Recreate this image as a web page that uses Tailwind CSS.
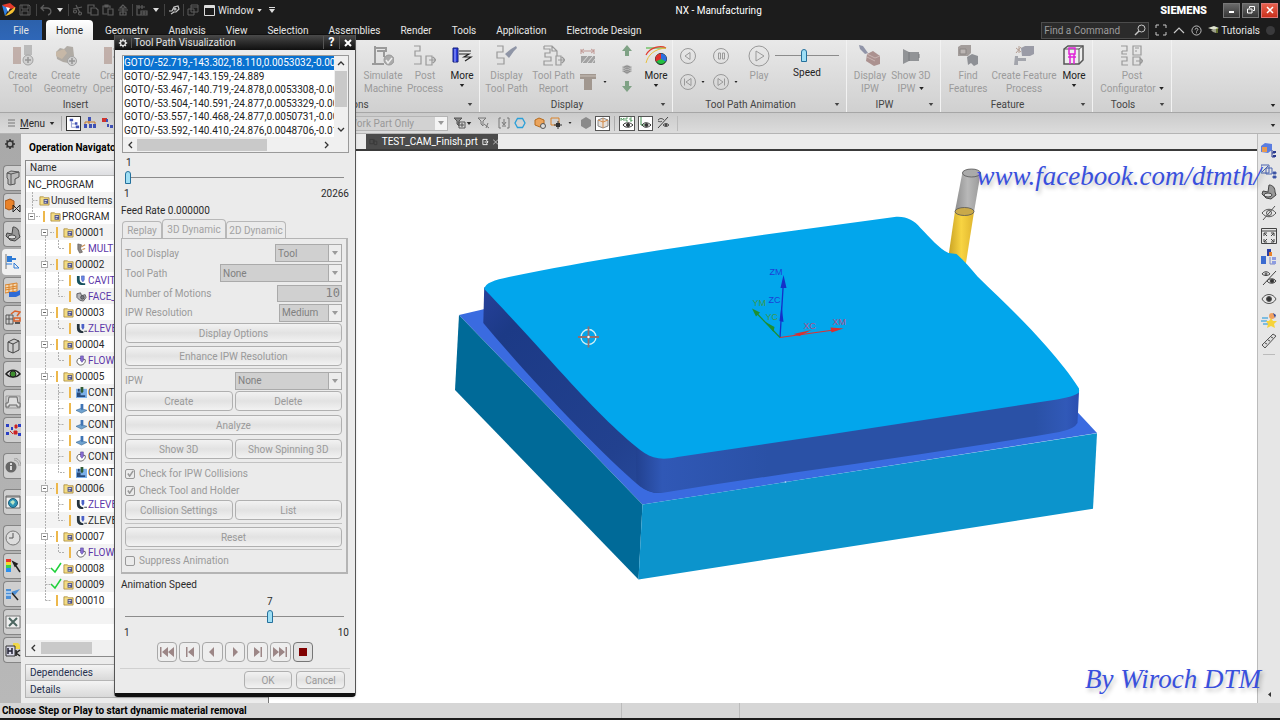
<!DOCTYPE html>
<html lang="en">
<head>
    <meta charset="UTF-8">
    <meta name="viewport" content="width=device-width, initial-scale=1.0">
    <title>NX - Manufacturing</title>
    <script src="https://cdn.jsdelivr.net/npm/@tailwindcss/browser@4"></script>
</head>
<body class="relative flex h-screen flex-col overflow-hidden bg-[#1c1c1c] font-[Roboto,'Open_Sans',sans-serif] text-[10px] leading-[13px] text-[#2a2a2a]">

    <!-- Icon sprite -->
    <svg class="hidden" xmlns="http://www.w3.org/2000/svg">
        <symbol id="tri" viewBox="0 0 6 4"><path d="M0 0h6L3 4z" fill="currentColor"/></symbol>
        <symbol id="gear" viewBox="0 0 12 12"><circle cx="6" cy="6" r="3" fill="none" stroke="currentColor" stroke-width="1.5"/><path d="M6 1v2M6 9v2M1 6h2M9 6h2M2.5 2.5l1.3 1.3M8.2 8.2l1.3 1.3M2.5 9.5l1.3-1.3M8.2 3.8l1.3-1.3" stroke="currentColor" stroke-width="1.6"/></symbol>
        <symbol id="folder" viewBox="0 0 12 12"><path d="M1 2h4l1 1h5v8H1z" fill="#f3dc84" stroke="#a3812c" stroke-width=".8"/><path d="M5 4.500h5v5H5z" fill="#4a4f8a"/><path d="M6 6h3M6 8h2" stroke="#fff" stroke-width=".8"/></symbol>
        <symbol id="op-multi" viewBox="0 0 12 12"><path d="M2 1l4 1-1 4 2 4-3 1-2-4z" fill="#8d8784" stroke="#5b5552" stroke-width=".7"/><path d="M6 4l4-2M7 7l3-1" stroke="#c98c4d" stroke-width="1.2"/></symbol>
        <symbol id="op-cavity" viewBox="0 0 12 12"><path d="M1 1h3v4c0 3 2 4 4 4h2v2H6C3 11 1 9 1 6z" fill="#15505c"/><path d="M6 1h3v4l-1 2H7L6 5z" fill="#6a86e8" stroke="#3c50a8" stroke-width=".6"/></symbol>
        <symbol id="op-face" viewBox="0 0 12 12"><path d="M1 3l4-1 1 3 4-1 1 3-3 4-4-1-3-3z" fill="#b5b5b8" stroke="#4e4e55" stroke-width=".9"/><circle cx="7" cy="7" r="2" fill="#77777f" stroke="#333" stroke-width=".6"/></symbol>
        <symbol id="op-zlevel" viewBox="0 0 12 12"><path d="M1 1h3v4c0 3 2 4 4 4v2H6C3 11 1 9 1 6z" fill="#26333d"/><path d="M6 1h3v4l-1 2H7L6 5z" fill="#4a60c8"/><path d="M9 9h3" stroke="#26333d"/></symbol>
        <symbol id="op-flow" viewBox="0 0 12 12"><path d="M1 7c0-3 3-4 5-3l4 1c1 3-2 6-5 6-2 0-4-2-4-4z" fill="#fff" stroke="#444" stroke-width=".9"/><path d="M5 1h3v5L6.500 8 5 6z" fill="#8a6fd6" stroke="#4b3a91" stroke-width=".6"/></symbol>
        <symbol id="op-area" viewBox="0 0 12 12"><path d="M0 8l5-2 7 2-6 3z" fill="#6fa2cf" stroke="#2e5d8a" stroke-width=".6"/><path d="M5 1h3v5L6.500 8 5 6z" fill="#3f74b5"/></symbol>
        <symbol id="op-pocket" viewBox="0 0 12 12"><path d="M0 2h12v10H0z" fill="#7db0ea"/><path d="M1 6h4v3h5v2H1z" fill="#274a7c"/><path d="M5 0h3v5L6.500 7 5 5z" fill="#2f5a33"/><path d="M2 2h2v3H2z" fill="#1e3a66"/></symbol>
        <symbol id="check" viewBox="0 0 12 12"><path d="M1 6l4 4 6-9" fill="none" stroke="#1fd03a" stroke-width="1.500"/></symbol>
        <symbol id="nodes" viewBox="0 0 14 14"><path d="M2 2h4v3H2zM8 6h3v3H8zM9 10h4v3H9z" fill="#3f51b5"/><path d="M4 5v3h4M4 8v4h5" fill="none" stroke="#8591c9"/></symbol>
    </svg>

    <!-- Title bar -->
    <header class="flex h-5 shrink-0 items-center text-white">
        <div class="flex w-[277px] items-center gap-[3px] pl-[2px] text-[#5c5c5c]">
            <svg class="h-[14px] w-[14px]" viewBox="0 0 14 14"><path d="M0 2l7 3-4 8z" fill="#2f7fe0"/><path d="M0 2l8-2 6 5-7 1z" fill="#e33a2c"/><path d="M13 4c1 4-4 8-10 9l5-5z" fill="#f5c131"/><path d="M4 4l4 1-2 4z" fill="#fff"/></svg>
            <svg class="h-3 w-3" viewBox="0 0 12 12" fill="none" stroke="currentColor"><path d="M1 1h9l1 1v9H1zM3 1v4h6V1M3 11V7h6v4"/></svg>
            <span class="ml-[2px] h-3 w-px bg-[#444]"></span>
            <svg class="h-3 w-3" viewBox="0 0 12 12" fill="none" stroke="currentColor" stroke-width="1.300"><path d="M4 1L1 4l3 3M1 4h6c5 0 5 6 1 7"/></svg>
            <svg class="mx-[2px] h-1 w-[6px] text-[#ddd]"><use href="#tri"/></svg>
            <span class="h-3 w-px bg-[#444]"></span>
            <svg class="h-3 w-3" viewBox="0 0 12 12" fill="none" stroke="currentColor" stroke-width="1.200"><path d="M1 5l9-2M4 1l4 8"/><circle cx="3" cy="7.500" r="1.500"/><circle cx="8" cy="9.500" r="1.500"/></svg>
            <svg class="h-3 w-3" viewBox="0 0 12 12" fill="none" stroke="currentColor" stroke-width="1.200"><path d="M4 9H1V1h6v2M4 4h5l2 2v5H4z"/></svg>
            <svg class="h-3 w-3" viewBox="0 0 12 12" fill="none" stroke="currentColor" stroke-width="1.200"><path d="M5 10H1V2h7v2M3 1h3v2H3zM6 5h5v6H6z"/></svg>
            <svg class="h-3 w-3" viewBox="0 0 12 12" fill="none" stroke="currentColor" stroke-width="1.200"><path d="M6 1L3 4h6zM1 6h10M6 4v7M3 8h6v3H3z"/></svg>
            <span class="h-3 w-px bg-[#444]"></span>
            <svg class="h-3 w-3" viewBox="0 0 12 12" fill="none" stroke="currentColor" stroke-width="1.200"><path d="M1 1v10h4M1 3h8M3 1v4M6 1v4M5 7h6v4H5zM5 9h6M8 7v4"/></svg>
            <svg class="mx-[2px] h-1 w-[6px] text-[#ddd]"><use href="#tri"/></svg>
            <span class="h-3 w-px bg-[#444]"></span>
            <svg class="h-3 w-3 text-[#c8c8c8]" viewBox="0 0 12 12" fill="none" stroke="currentColor" stroke-width="1.200"><path d="M1 7h3l2-4 4-1 1 3-3 3H5M3 10l3-2"/><circle cx="7" cy="5" r="1"/></svg>
            <span class="h-3 w-px bg-[#444]"></span>
            <svg class="h-3 w-3" viewBox="0 0 12 12" fill="none" stroke="currentColor"><path d="M4 1h7v7H4zM4 3h7M1 5h6v6H1z"/></svg>
            <button class="ml-[2px] flex items-center gap-[3px] text-[#e4e4e4]">
                <svg class="h-[11px] w-[11px]" viewBox="0 0 11 11" fill="none" stroke="#ddd"><path d="M.5.500h10v10H.500z"/><path d="M1 2h9" stroke-width="2"/></svg>
                Window
                <svg class="h-[3px] w-[5px]"><use href="#tri"/></svg>
            </button>
            <svg class="ml-1 h-[6px] w-[6px]" viewBox="0 0 6 6" fill="#ddd"><path d="M0 0h6v1H0zM0 2h6L3 6z"/></svg>
        </div>
        <h1 class="flex-1 text-center">NX - Manufacturing</h1>
        <div class="flex items-center gap-[2px] pr-[2px]">
            <span class="mr-[14px] text-[11px] font-black">SIEMENS</span>
            <button aria-label="Minimize" class="flex h-[15px] w-[17px] items-end justify-center border border-[#777] bg-gradient-to-b from-[#6a6a6a] to-[#363636] pb-1"><span class="h-[2px] w-[5px] bg-white"></span></button>
            <button aria-label="Restore" class="flex h-[15px] w-[17px] items-center justify-center border border-[#777] bg-gradient-to-b from-[#6a6a6a] to-[#363636]"><svg class="h-2 w-2" viewBox="0 0 8 8" fill="none" stroke="#fff"><path d="M2.500 2V.500h5v4H6M.500 3h4.500v4H.500z"/></svg></button>
            <button aria-label="Close" class="flex h-[15px] w-[17px] items-center justify-center border border-[#d77] bg-gradient-to-b from-[#e8604c] to-[#c8301c]"><svg class="h-2 w-2" viewBox="0 0 8 8" stroke="#fff" stroke-width="1.500"><path d="M1 1l6 6M7 1L1 7"/></svg></button>
        </div>
    </header>

    <!-- Ribbon tabs -->
    <nav class="flex h-5 shrink-0 items-stretch text-[#e6e6e6]">
        <button class="mr-1 w-[42px] bg-gradient-to-b from-[#2c61ab] to-[#2f67b8]">File</button>
        <button class="mr-3 w-[47px] rounded-t-sm bg-gradient-to-b from-white to-[#e8e8e8] text-[#222]">Home</button>
        <div class="flex items-center gap-5">
            <button>Geometry</button>
            <button>Analysis</button>
            <button>View</button>
            <button>Selection</button>
            <button>Assemblies</button>
            <button>Render</button>
            <button>Tools</button>
            <button>Application</button>
            <button>Electrode Design</button>
        </div>
        <div class="ml-auto flex items-center gap-[6px] pr-[5px] text-[#c8c8c8]">
            <label class="flex h-[17px] w-[108px] items-center border border-[#4c4c4c] bg-[#2b2b2b] px-[2px]">
                <input type="text" placeholder="Find a Command" aria-label="Find a Command" class="w-full min-w-0 bg-transparent placeholder-[#9c9c9c] outline-none">
                <svg class="h-3 w-3 shrink-0" viewBox="0 0 12 12" fill="none" stroke="#c8c8c8"><circle cx="7.500" cy="4.500" r="3.500"/><path d="M5 7l-4 4" stroke-width="1.500"/></svg>
            </label>
            <svg class="h-3 w-3" viewBox="0 0 12 12" fill="none" stroke="currentColor"><path d="M1 4V1h3M8 1h3v3M11 8v3H8M4 11H1V8"/></svg>
            <svg class="h-3 w-3" viewBox="0 0 12 12" fill="none" stroke="currentColor" stroke-width="1.200"><path d="M1 9l5-5 5 5"/></svg>
            <svg class="h-[11px] w-[11px]" viewBox="0 0 12 12" fill="none" stroke="currentColor"><circle cx="6" cy="6" r="5"/><path d="M4.500 5c0-2 3-2 3 0 0 1-1.500 1-1.500 2.200M6 8v1"/></svg>
            <button class="flex items-center gap-[2px] text-[#e6e6e6]"><svg class="h-2 w-[11px]" viewBox="0 0 11 8"><path d="M0 2l6-2 5 2-5 2z" fill="#dfe3d0"/><path d="M3 4l5-1v4l-3-1z" fill="#9da08c"/><path d="M9 2v5" stroke="#a9c13f"/></svg>Tutorials</button>
            <span class="h-[9px] w-[9px] rounded-full bg-[#3a3a3c]"></span>
        </div>
    </nav>

    <!-- Ribbon -->
    <section class="flex h-[73px] shrink-0 border-b border-[#a6a6a6] bg-gradient-to-b from-[#e9e9e9] to-[#d0d0d0] text-[#9b9b9b]">
        <div class="flex w-[168px] flex-col border-r border-[#f2f2f2]">
            <div class="flex h-[58px] pt-[5px] text-center">
                <button class="flex w-[45px] flex-col items-center gap-[2px]">
                    <svg class="h-[22px] w-[22px] shrink-0 opacity-70" viewBox="0 0 22 22"><path d="M1 2h8v17H1z" fill="#b39a92"/><path d="M12 0h8v10h-8z" fill="#a9a9a9"/><circle cx="16" cy="15" r="5" fill="#c9c9c9" stroke="#888"/><path d="M16 12v6M13 15h6" stroke="#777" stroke-width="1.500"/></svg>
                    Create<br>Tool</button>
                <button class="flex w-[41px] flex-col items-center gap-[2px]">
                    <svg class="h-[22px] w-[22px] shrink-0 opacity-70" viewBox="0 0 22 22"><path d="M1 7l4-4 4 1 3-3 6 1 1 9-6 7-5-1-6-3z" fill="#9a938a"/><path d="M1 7l8-3 3 4-5 6-6-3z" fill="#bba68e"/><circle cx="17" cy="16" r="4.500" fill="#c9c9c9" stroke="#888"/><path d="M17 13v6M14 16h6" stroke="#777" stroke-width="1.500"/></svg>
                    Create<br>Geometry</button>
                <button class="flex w-[57px] flex-col items-center gap-[2px]">
                    <svg class="h-[22px] w-[22px] shrink-0 opacity-70" viewBox="0 0 22 22"><path d="M0 2h8v17H0z" fill="#b39a92"/><path d="M9 4h10M11 8h6M9 12h10" stroke="#888"/></svg>
                    Create<br>Operation</button>
            </div>
            <div class="flex items-center text-[#444]"><span class="flex-1 pr-4 text-center">Insert</span></div>
        </div>

        <div class="flex w-[312px] flex-col border-r border-[#f2f2f2]">
            <div class="flex h-[58px] justify-end pt-[5px] text-center">
                <button class="flex w-11 flex-col items-center gap-[2px]">
                    <svg class="h-[22px] w-[22px] shrink-0" viewBox="0 0 22 22" fill="none" stroke="#9a9a9a"><path d="M3 1v18M0 19h12M2 3h12v3H5M12 6v6" stroke-width="2"/><circle cx="17" cy="15" r="5" fill="#ababab" stroke="#999"/><path d="M14 15l2 3 4-5" stroke="#eee" stroke-width="1.500"/></svg>
                    Simulate<br>Machine</button>
                <button class="flex w-10 flex-col items-center gap-[2px]">
                    <svg class="h-[22px] w-[22px] shrink-0" viewBox="0 0 22 22" fill="none" stroke="#999" stroke-width="1.200"><path d="M0 1h6v5H1v5h6v8H0M12 11h6v9h-6zM15 15h6M19 12l3 3-3 3"/></svg>
                    Post<br>Process</button>
                <button class="flex w-[34px] flex-col items-center gap-[2px] text-[#222]">
                    <svg class="h-[22px] w-[22px] shrink-0" viewBox="0 0 22 22"><path d="M2 3h5v14H2z" fill="#2a3be0" stroke="#15207a"/><path d="M4 4v13" stroke="#aab4ff"/><path d="M8 6h12M8 9h10l-5 3h7l-6 4" fill="none" stroke="#222" stroke-width="1.200"/></svg>
                    More
                    <svg class="h-[3px] w-[6px]"><use href="#tri"/></svg></button>
            </div>
            <div class="flex items-center pl-[60px] text-[#444]"><span class="flex-1 text-center">Operations</span><svg class="mx-[6px] h-[3px] w-[6px]"><use href="#tri"/></svg></div>
        </div>

        <div class="flex w-[193px] flex-col border-r border-[#f2f2f2]">
            <div class="flex h-[58px] pt-[5px] text-center">
                <button class="flex w-[53px] flex-col items-center gap-[2px] whitespace-nowrap">
                    <svg class="h-[22px] w-[22px] shrink-0" viewBox="0 0 22 22"><path d="M1 1h6v6H1v6h7v6H1" fill="none" stroke="#999" stroke-width="1.200"/><path d="M20 1l-5 3-6 5 4 4 5-7 3-3z" fill="#8f95a6"/></svg>
                    <span>Display<br>Tool Path</span></button>
                <button class="flex w-[41px] flex-col items-center gap-[2px] whitespace-nowrap">
                    <svg class="h-[22px] w-[22px] shrink-0" viewBox="0 0 22 22" fill="none" stroke="#999" stroke-width="1.200"><path d="M1 1h8l5 5v5M1 1v3h6v4H2v4h6v4H1v4h9M9 1v5h5M13 11h5v9h-5zM15 15h6M19 12l3 3-3 3"/></svg>
                    <span>Tool Path<br>Report</span></button>
                <div class="flex w-[37px] flex-col gap-[10px] pt-[3px] pl-[6px]">
                    <svg class="h-4 w-4" viewBox="0 0 16 16"><path d="M1 8h14v7H1z" fill="#a2a2a2"/><path d="M2 15l6-7M7 15l6-7M12 15l3-4" stroke="#ddd"/><path d="M1 6V1M14 6V1M1 3h13M4 1L1 3l3 2M11 1l3 2-3 2" fill="none" stroke="#c09894"/></svg>
                    <span class="flex items-center gap-[7px] text-[#222]"><svg class="h-4 w-4" viewBox="0 0 16 16"><path d="M0 0h16v5h-4v11H4V5H0z" fill="#a1978f"/><path d="M0 2h16" stroke="#c9c0b8"/></svg><svg class="h-[2px] w-[4px]"><use href="#tri"/></svg></span>
                </div>
                <div class="flex w-8 flex-col items-center gap-[6px]">
                    <svg class="h-3 w-3" viewBox="0 0 12 12"><path d="M6 0l5 6H8v5H4V6H1z" fill="#7fa285"/></svg>
                    <svg class="h-3 w-3" viewBox="0 0 12 12" fill="#8a8a8a" stroke="#c4c4c4" stroke-width=".6"><path d="M1 8l5-2 5 2-5 3zM1 6l5-2 5 2-5 3zM1 4l5-2 5 2-5 3z"/></svg>
                    <svg class="h-3 w-3" viewBox="0 0 12 12"><path d="M6 11l5-6H8V0H4v5H1z" fill="#7fa285"/></svg>
                </div>
                <button class="flex w-[26px] flex-col items-center gap-[2px] text-[#222]">
                    <svg class="h-[22px] w-[22px] shrink-0" viewBox="0 0 22 22"><path d="M1 3h20" stroke="#57b94b" stroke-width="1.200"/><path d="M1 10C5 2 16 0 21 3" fill="none" stroke="#e23b2e" stroke-width="1.200"/><path d="M1 18c2-8 8-14 20-15" fill="none" stroke="#e9c03b"/><circle cx="16" cy="14" r="5.500" fill="#23c040" stroke="#222"/><path d="M16 14V8.500a5.500 5.500 0 0 0-5 8z" fill="#e02f2f"/><path d="M16 14V8.500a5.500 5.500 0 0 1 5 8z" fill="#2c6ee0"/></svg>
                    More
                    <svg class="h-[3px] w-[6px]"><use href="#tri"/></svg></button>
            </div>
            <div class="flex items-center text-[#444]"><span class="flex-1 text-center">Display</span><svg class="mx-[6px] h-[3px] w-[6px]"><use href="#tri"/></svg></div>
        </div>

        <div class="flex w-[174px] flex-col border-r border-[#f2f2f2]">
            <div class="flex h-[58px] pt-[5px] text-center">
                <div class="grid w-[71px] grid-cols-2 content-start gap-y-2 pt-[2px] pl-[6px] text-[#222]">
                    <button aria-label="Play backward"><svg class="h-[18px] w-[18px]" viewBox="0 0 18 18" fill="none" stroke="#999"><circle cx="9" cy="9" r="7.500"/><path d="M11 5.500v7L6 9z"/></svg></button>
                    <button aria-label="Pause"><svg class="h-[18px] w-[18px]" viewBox="0 0 18 18" fill="none" stroke="#999"><circle cx="9" cy="9" r="7.500"/><path d="M6.500 6h2v6h-2zM10.500 6h2v6h-2z"/></svg></button>
                    <button aria-label="Step back" class="flex items-center gap-1"><svg class="h-[18px] w-[18px]" viewBox="0 0 18 18" fill="none" stroke="#999"><circle cx="9" cy="9" r="7.500"/><path d="M12 5.500v7L7 9zM5.500 5.500v7"/></svg><svg class="h-[2px] w-[4px]"><use href="#tri"/></svg></button>
                    <button aria-label="Step forward" class="flex items-center gap-1"><svg class="h-[18px] w-[18px]" viewBox="0 0 18 18" fill="none" stroke="#999"><circle cx="9" cy="9" r="7.500"/><path d="M6 5.500v7L11 9zM12.500 5.500v7"/></svg><svg class="h-[2px] w-[4px]"><use href="#tri"/></svg></button>
                </div>
                <button class="flex w-[30px] flex-col items-center gap-[2px]">
                    <svg class="h-[22px] w-[22px] shrink-0" viewBox="0 0 22 22" fill="none" stroke="#999"><circle cx="11" cy="11" r="10"/><path d="M8 6v10l8-5z"/></svg>
                    Play</button>
                <label class="flex w-[66px] flex-col items-center gap-1 pt-[3px] text-[#222]">
                    <input type="range" min="0" max="100" value="45" class="h-[14px] w-16 appearance-none bg-transparent [&::-webkit-slider-runnable-track]:h-px [&::-webkit-slider-runnable-track]:bg-[#8c8c8c] [&::-webkit-slider-thumb]:-mt-[6px] [&::-webkit-slider-thumb]:h-[13px] [&::-webkit-slider-thumb]:w-[6px] [&::-webkit-slider-thumb]:appearance-none [&::-webkit-slider-thumb]:rounded-t-full [&::-webkit-slider-thumb]:border [&::-webkit-slider-thumb]:border-[#24709c] [&::-webkit-slider-thumb]:bg-[#9fdff5]">
                    Speed</label>
            </div>
            <div class="flex items-center text-[#444]"><span class="flex-1 text-center">Tool Path Animation</span><svg class="mx-[6px] h-[3px] w-[6px]"><use href="#tri"/></svg></div>
        </div>

        <div class="flex w-[94px] flex-col border-r border-[#f2f2f2]">
            <div class="flex h-[58px] pt-[5px] text-center">
                <button class="flex w-[46px] flex-col items-center gap-[2px]">
                    <svg class="h-[22px] w-[22px] shrink-0" viewBox="0 0 22 22"><path d="M0 0l4 1 5 7-3 1-5-5z" fill="#9094a8"/><path d="M8 9l6-3 7 5v8l-6 2-8-5z" fill="#ab918f"/><path d="M8 12l8 4M8 9l8 4 5-2" stroke="#c8b4b2" fill="none"/></svg>
                    Display<br>IPW</button>
                <button class="flex w-9 flex-col items-center gap-[2px] whitespace-nowrap">
                    <svg class="h-[22px] w-[22px] shrink-0" viewBox="0 0 22 22"><path d="M3 4l6 3h10v9H9l-6 3z" fill="#919396"/><path d="M9 7v9M19 9v4" stroke="#77797c"/></svg>
                    <span>Show 3D</span>
                    <span class="-mt-[2px] flex items-center gap-1">IPW<svg class="h-[3px] w-[5px] text-[#222]"><use href="#tri"/></svg></span></button>
            </div>
            <div class="flex items-center text-[#444]"><span class="flex-1 text-center">IPW</span><svg class="mx-[6px] h-[3px] w-[6px]"><use href="#tri"/></svg></div>
        </div>

        <div class="flex w-[152px] flex-col border-r border-[#f2f2f2]">
            <div class="flex h-[58px] pt-[5px] pl-[3px] text-center">
                <button class="flex w-12 flex-col items-center gap-[2px]">
                    <svg class="h-[22px] w-[22px] shrink-0" viewBox="0 0 22 22"><path d="M1 2l3-2h10v8l-3 3H1z" fill="#a39d9b"/><path d="M3 4h6v5H3z" fill="#bcb6b4" stroke="#8a8583"/><path d="M10 12l5-3 6 2v8l-4 2-3-3-3 2z" fill="#8e9095"/></svg>
                    Find<br>Features</button>
                <button class="flex w-16 flex-col items-center gap-[2px] whitespace-nowrap">
                    <svg class="h-[22px] w-[22px] shrink-0" viewBox="0 0 22 22"><path d="M8 3l4-2h9v8l-4 2H9z" fill="#9a9ba6"/><path d="M3 3l5 4M8 2L3 8M6 1v7" stroke="#b29d92"/><path d="M2 11h3v2h8v3H5v4H1z" fill="#a3a5ac"/></svg>
                    <span>Create Feature<br>Process</span></button>
                <button class="flex min-w-0 flex-1 flex-col items-center gap-[2px] text-[#222]">
                    <svg class="h-[22px] w-[22px] shrink-0" viewBox="0 0 22 22"><path d="M1 4l4-3h15v14l-4 4H1z" fill="#eee" stroke="#555" stroke-width="1.500"/><path d="M16 4v15M1 4h15l4-3" fill="none" stroke="#555"/><path d="M6 3h6v6H6zM7 9v10M11 9v10M5 12h8" fill="none" stroke="#e022d8" stroke-width="1.500"/></svg>
                    More
                    <svg class="h-[3px] w-[6px]"><use href="#tri"/></svg></button>
            </div>
            <div class="flex items-center text-[#444]"><span class="flex-1 text-center">Feature</span><svg class="mx-[6px] h-[3px] w-[6px]"><use href="#tri"/></svg></div>
        </div>

        <div class="flex w-[79px] flex-col border-r border-[#f2f2f2]">
            <div class="flex h-[58px] justify-center pt-[5px] text-center">
                <button class="flex flex-col items-center gap-[2px]">
                    <svg class="h-[22px] w-[22px] shrink-0" viewBox="0 0 22 22" fill="none" stroke="#999" stroke-width="1.200"><path d="M0 1h6v5H1M1 6v3h5M0 12h6v4H1v4h6M12 1h8v9h-8zM14 3h4M14 6h2M12 12h7v8h-7zM15 16h6M19 13l3 3-3 3"/></svg>
                    <span>Post</span>
                    <span class="-mt-[2px] flex items-center gap-[3px]">Configurator<svg class="h-[3px] w-[5px] text-[#222]"><use href="#tri"/></svg></span></button>
            </div>
            <div class="flex items-center text-[#444]"><span class="flex-1 text-center">Tools</span><svg class="mx-[6px] h-[3px] w-[6px]"><use href="#tri"/></svg></div>
        </div>
        <svg class="mt-16 mr-1 ml-auto h-[3px] w-[6px] text-[#222]"><use href="#tri"/></svg>
    </section>

    <!-- Border bar -->
    <section class="flex h-[21px] shrink-0 items-center border-b border-[#b4b4b4] bg-gradient-to-b from-[#cbcbcb] to-[#dcdcdc]">
        <button class="flex items-center gap-1 pl-2"><svg class="h-2 w-2" viewBox="0 0 8 8" stroke="#777"><path d="M0 1h7M0 4h7M0 7h7"/></svg><span><u>M</u>enu</span><svg class="h-[3px] w-[6px]"><use href="#tri"/></svg></button>
        <span class="mr-1 ml-[6px] h-[15px] w-px bg-[#aaa]"></span>
        <span class="flex h-[15px] w-[15px] items-center justify-center border border-[#333] bg-white"><svg class="h-3 w-3"><use href="#nodes"/></svg></span>
        <svg class="ml-[3px] h-3 w-3" viewBox="0 0 12 12"><path d="M4 0h3v4H4zM0 7h3v4H0zM5 7h3v4H5zM9 7h3v4H9z" fill="#3f51b5"/><path d="M5 4v3M1 7V5h10v2" fill="none" stroke="#c77b2b"/></svg>
        <svg class="ml-[5px] h-3 w-3" viewBox="0 0 12 12"><path d="M1 1h5v4H1z" fill="#d0342c"/><path d="M5 2h2v3H5zM6 7h2v3H6zM9 8h3v3H9z" fill="#3f51b5"/></svg>
        <div class="ml-[232px] flex h-[15px] w-[103px] border border-[#b5b5b5] bg-[#d2d2d2]">
            <select aria-label="Selection scope" class="min-w-0 flex-1 appearance-none pl-[2px] text-[#999] opacity-100" disabled><option>Work Part Only</option></select>
            <span class="flex w-3 items-center justify-center bg-[#f4f4f4] text-[#999]"><svg class="h-1 w-[6px]"><use href="#tri"/></svg></span>
        </div>
        <div class="flex flex-1 items-center gap-1 pl-[6px]">
            <svg class="h-3 w-3" viewBox="0 0 12 12" fill="none" stroke="#555"><path d="M0 1h8L5 4v5L3 7V4z" fill="#888"/><path d="M5 5h6v6H5zM7 7h2v2H7z"/></svg>
            <svg class="-ml-1 h-[3px] w-[6px]"><use href="#tri"/></svg>
            <svg class="ml-[2px] h-3 w-3" viewBox="0 0 12 12" fill="none" stroke="#777"><path d="M0 1h8L5 4v5L3 7V4zM6 7l5 4M8 11l2-5"/></svg>
            <svg class="ml-1 h-3 w-3" viewBox="0 0 12 12" fill="none" stroke="#777"><path d="M3 1H1v10h2M9 1h2v10H9M6 2v5M4 5l2 3 2-3M4 9h4"/></svg>
            <svg class="h-3 w-3" viewBox="0 0 12 12" fill="none" stroke="#2a9fd8" stroke-width="1.300"><path d="M3.500 1.500h5L11 6l-2.500 4.500h-5L1 6z"/></svg>
            <svg class="ml-1 h-3 w-3" viewBox="0 0 12 12"><path d="M1 3l4-2 5 2v5l-4 2-5-2z" fill="#eba45c" stroke="#b56a1d"/><circle cx="9" cy="9" r="2.500" fill="#ddd" stroke="#555"/></svg>
            <svg class="h-3 w-3" viewBox="0 0 12 12" fill="none"><path d="M1 1h8v7H1z" stroke="#d9822b"/><path d="M8 4v8M4 8h8" stroke="#333"/><path d="M6 6h4v4H6z" fill="#333"/></svg>
            <svg class="ml-[2px] h-[2px] w-[4px]"><use href="#tri"/></svg>
            <svg class="ml-1 h-3 w-3" viewBox="0 0 12 12"><path d="M1 3l5-3 5 3v6l-5 3-5-3z" fill="#8a8a8a"/></svg>
            <span class="-ml-px flex h-[15px] w-[15px] items-center justify-center border border-[#555] bg-white"><svg class="h-3 w-3" viewBox="0 0 12 12" fill="none" stroke="#888"><path d="M1 3l5-2 5 2v6l-5 2-5-2z" fill="#e6e0da"/><path d="M6 1v10M1 3l5 2 5-2" stroke="#d38b4a"/></svg></span>
            <span class="h-[15px] w-px bg-[#aaa]"></span>
            <span class="flex h-[15px] w-4 flex-col items-center justify-center border border-[#555] bg-white"><svg class="h-3 w-[14px]" viewBox="0 0 14 12" fill="none" stroke="#333"><path d="M1 4V1l1.500 2L4 1v3M8 1H6v3h2M12 1h-2v2h2v1h-2" stroke="#3f8f4f" stroke-width=".8"/><path d="M3 8c2-3 7-3 10 0-3 3-8 3-10 0z"/><circle cx="8" cy="8" r="1.500" fill="#333"/></svg></span>
            <span class="-ml-px flex h-[15px] w-[15px] items-center justify-center border border-[#555] bg-white"><svg class="h-3 w-3" viewBox="0 0 12 12" fill="none" stroke="#333"><path d="M1 0v8h5" stroke="#3f8f4f"/><path d="M2 8c2-3 6-3 9 0-3 3-7 3-9 0z"/><circle cx="6.500" cy="8" r="1.500" fill="#333"/></svg></span>
            <svg class="h-3 w-3" viewBox="0 0 12 12" fill="none" stroke="#444"><path d="M11 0L1 11M1 3c2-2 4-2 6 0M1 4c2 1 3 1 4 0M6 8c2-2 4-2 6 0-2 2-4 2-6 0z"/><circle cx="9" cy="8" r="1" fill="#333"/></svg>
            <span class="ml-1 h-[15px] w-px bg-[#bbb]"></span>
            <svg class="mt-1 mr-1 ml-auto h-[3px] w-[6px]"><use href="#tri"/></svg>
        </div>
    </section>

    <!-- Work area -->
    <main class="flex min-h-0 flex-1">

        <!-- Resource bar -->
        <aside class="flex w-[21px] shrink-0 flex-col items-end gap-[2px] bg-gradient-to-b from-[#a9a9a9] to-[#b8b8b8]">
            <svg class="mt-1 mr-[5px] mb-[13px] h-3 w-3 shrink-0 text-[#333]"><use href="#gear"/></svg>
            <button aria-label="Assembly Navigator" class="flex h-[26px] w-[18px] shrink-0 items-center justify-center rounded-l border border-r-0 border-[#858585] bg-[#cfcfcf]"><svg class="h-4 w-4" viewBox="0 0 16 16" stroke="#555" fill="#bbb"><path d="M2 3l4-2 8 1v5l-4 2v5l-5 1-2-1V9L2 8z"/><path d="M6 4v11M2 3l4 1 8-2" fill="none"/></svg></button>
            <button aria-label="Constraint Navigator" class="flex h-[26px] w-[18px] shrink-0 items-center justify-center rounded-l border border-r-0 border-[#858585] bg-[#cfcfcf]"><svg class="h-4 w-4" viewBox="0 0 16 16"><path d="M0 3l5-2 4 2v7l-5 2-4-2z" fill="#e8822a" stroke="#a2541a"/><path d="M8 7l7 7V7l-7 7z" fill="none" stroke="#222"/></svg></button>
            <button aria-label="Part Navigator" class="flex h-[26px] w-[18px] shrink-0 items-center justify-center rounded-l border border-r-0 border-[#858585] bg-[#cfcfcf]"><svg class="h-4 w-4" viewBox="0 0 16 16" fill="#999" stroke="#444"><path d="M1 10l1-3 5 1 1-7c4 0 6 3 6 7l1 3-5 4-5-1z"/><ellipse cx="7" cy="11" rx="4" ry="2" fill="#ddd"/></svg></button>
            <button aria-label="Operation Navigator" class="flex h-[26px] w-[19px] shrink-0 items-center justify-center rounded-l bg-[#f0f0f0]"><svg class="h-4 w-4" viewBox="0 0 16 16"><path d="M2 0v15" stroke="#777"/><path d="M3 2h5v2h4v2H8v2H3z" fill="#2e7bd6"/><path d="M2 10h6M10 14V9l5 5z" fill="none" stroke="#2e7bd6"/></svg></button>
            <button aria-label="Machine Tool" class="flex h-[26px] w-[18px] shrink-0 items-center justify-center rounded-l border border-r-0 border-[#858585] bg-[#cfcfcf]"><svg class="h-4 w-4" viewBox="0 0 16 16"><path d="M0 3l12-2v8L0 11z" fill="#f3d7b0" stroke="#d9822b"/><path d="M0 6l12-2M0 8l12-2M4 2v8M8 2v8" stroke="#d9822b"/><path d="M4 10h7l4-2v5l-4 2H4z" fill="#2e6bd6"/></svg></button>
            <button aria-label="Process Assistant" class="flex h-[26px] w-[18px] shrink-0 items-center justify-center rounded-l border border-r-0 border-[#858585] bg-[#cfcfcf]"><svg class="h-4 w-4" viewBox="0 0 16 16" fill="none" stroke="#555"><path d="M1 5h7v9H1zM1 9h7M4 5v9"/><path d="M6 4l4-3 5 1-3 4M9 8h6v3H9z" stroke="#d9622b" stroke-width="1.500"/><path d="M10 13h5" stroke-width="2"/></svg></button>
            <button aria-label="Reuse Library" class="flex h-[26px] w-[18px] shrink-0 items-center justify-center rounded-l border border-r-0 border-[#858585] bg-[#cfcfcf]"><svg class="h-4 w-4" viewBox="0 0 16 16" fill="#ccc" stroke="#444"><path d="M3 4l6-3 5 2v9l-6 3-5-2z"/><path d="M3 4l5 2 6-3M8 6v9" fill="none"/></svg></button>
            <button aria-label="View Manager" class="flex h-[26px] w-[18px] shrink-0 items-center justify-center rounded-l border border-r-0 border-[#858585] bg-[#cfcfcf]"><svg class="h-4 w-4" viewBox="0 0 16 16"><path d="M1 8c4-5 10-5 14 0-4 4-10 4-14 0z" fill="#ddd" stroke="#222" stroke-width="1.500"/><circle cx="8" cy="8" r="3" fill="#3f8f2f" stroke="#222"/></svg></button>
            <button aria-label="Parts" class="flex h-[26px] w-[18px] shrink-0 items-center justify-center rounded-l border border-r-0 border-[#858585] bg-[#cfcfcf]"><svg class="h-4 w-4" viewBox="0 0 16 16" fill="#ddd" stroke="#666"><path d="M1 2h14v12H1z" fill="none" stroke="#999"/><path d="M4 3h8l1 6h2v4h-3v-2H4v2H1V9h2z"/></svg></button>
            <button aria-label="Dependencies" class="flex h-[26px] w-[18px] shrink-0 items-center justify-center rounded-l border border-r-0 border-[#858585] bg-[#cfcfcf]"><svg class="h-4 w-4" viewBox="0 0 16 16"><path d="M1 2h3v3H1zM6 5h2v3H6zM1 10h3v3H1z" fill="#2b3fc4"/><path d="M10 3h2v3h-2zM9 9h3v3H9zM5 9l3 3" fill="#c22" stroke="#c22"/><path d="M13 2h3v3h-3zM13 11h3v3h-3z" fill="#2b3fc4"/></svg></button>
            <button aria-label="Information" class="mt-2 flex h-[26px] w-[18px] shrink-0 items-center justify-center rounded-l border border-r-0 border-[#858585] bg-[#cfcfcf]"><svg class="h-4 w-4" viewBox="0 0 16 16"><circle cx="6" cy="9" r="5.500" fill="#666"/><path d="M6 5v2M6 8v4" stroke="#fff" stroke-width="1.500"/><path d="M9 2c3 0 5 3 5 6M9 0c4 0 7 4 7 8" fill="none" stroke="#999"/></svg></button>
            <button aria-label="Web Browser" class="mt-2 flex h-[26px] w-[18px] shrink-0 items-center justify-center rounded-l border border-r-0 border-[#858585] bg-[#cfcfcf]"><svg class="h-4 w-4" viewBox="0 0 16 16"><path d="M1 2h14v12H1z" fill="#eee" stroke="#666"/><path d="M1 3h14" stroke="#666"/><circle cx="8" cy="9" r="4.500" fill="#2d93b5" stroke="#1c5c78"/><path d="M5 8l3-2 2 2-2 3z" fill="#bde6c6"/></svg></button>
            <button aria-label="History" class="mt-2 flex h-[26px] w-[18px] shrink-0 items-center justify-center rounded-l border border-r-0 border-[#858585] bg-[#cfcfcf]"><svg class="h-4 w-4" viewBox="0 0 16 16"><circle cx="8" cy="8" r="7" fill="#ddd" stroke="#777"/><path d="M8 3v5H4" fill="none" stroke="#555"/></svg></button>
            <button aria-label="Materials" class="flex h-[26px] w-[18px] shrink-0 items-center justify-center rounded-l border border-r-0 border-[#858585] bg-[#cfcfcf]"><svg class="h-4 w-4" viewBox="0 0 16 16"><path d="M1 1h5v3H1z" fill="#e8342a"/><path d="M1 4h5v3H1z" fill="#f3d92c"/><path d="M1 7h5v3H1z" fill="#3bd04a"/><path d="M1 10h5v4H1z" fill="#2b8ff0"/><path d="M9 5l6 9M8 4l4 2-2 2z" stroke="#222" stroke-width="1.500"/></svg></button>
            <button aria-label="Tools" class="flex h-[26px] w-[18px] shrink-0 items-center justify-center rounded-l border border-r-0 border-[#858585] bg-[#cfcfcf]"><svg class="h-4 w-4" viewBox="0 0 16 16"><path d="M1 3h5v10H1zM6 6l9-3-5 6z" fill="#4b8fd6"/><path d="M1 6h5M1 9h5" stroke="#fff"/><path d="M7 7l6 7" stroke="#222" stroke-width="1.500"/></svg></button>
            <button aria-label="Roles" class="flex h-[26px] w-[18px] shrink-0 items-center justify-center rounded-l border border-r-0 border-[#858585] bg-[#cfcfcf]"><svg class="h-4 w-4" viewBox="0 0 16 16" fill="none"><path d="M1 2h14v12H1z" fill="#eee" stroke="#777"/><path d="M4 4l8 8M12 4l-8 8" stroke="#4c6660" stroke-width="2"/></svg></button>
            <button aria-label="Feature Library" class="flex h-[26px] w-[18px] shrink-0 items-center justify-center rounded-l border border-r-0 border-[#858585] bg-[#cfcfcf]"><svg class="h-4 w-4" viewBox="0 0 16 16"><path d="M8 1h5l2 2v4H8z" fill="#f0d84a"/><path d="M1 4h9v10H1z" fill="#d8d8e8" stroke="#333"/><path d="M3 6v6M7 6v6M3 9h4" stroke="#223" stroke-width="1.500"/><path d="M11 8v6M11 11l4-3M11 11l4 3" stroke="#222" stroke-width="1.500"/></svg></button>
        </aside>

        <!-- Operation navigator -->
        <section class="flex w-[248px] shrink-0 flex-col border-r border-[#777] bg-[#ececec] pl-1">
            <h2 class="flex h-[26px] shrink-0 items-center pl-1 font-bold text-black">Operation Navigator - Program Order</h2>
            <div class="flex min-h-0 flex-1 flex-col border border-[#8a8a8a] bg-white">
                <div class="h-[15px] shrink-0 border-b border-[#bbb] bg-gradient-to-b from-[#f4f4f4] to-[#dedfe2] pl-1">Name</div>
                <div class="relative min-h-0 flex-1 overflow-hidden">
                    <ul id="programTree"></ul>
                    <svg class="absolute top-0 left-0 h-[432px] w-[70px]" viewBox="0 0 70 432" fill="none" stroke="#b0b0b0" stroke-dasharray="2 1">
                        <path d="M6.500 16v22M6.500 24.500h6M10 40.500h4M19.500 60v364.500M19.500 392.500h6M19.500 408.500h6M19.500 424.500h6M24 56.500h4M24 88.500h4M24 136.500h4M24 168.500h4M24 200.500h4M24 312.500h4M24 360.500h4"/>
                        <path d="M32.500 64v8.500h6M32.500 96v24.500h6M32.500 104.500h6M32.500 144v8.500h6M32.500 176v8.500h6M32.500 208v88.500h6M32.500 216.500h6M32.500 232.500h6M32.500 248.500h6M32.500 264.500h6M32.500 280.500h6M32.500 320v24.500h6M32.500 328.500h6M32.500 368v8.500h6"/>
                    </svg>
                </div>
                <div class="flex h-4 shrink-0 items-center bg-[#f0f0f0] pl-1">
                    <svg class="h-2 w-[6px]" viewBox="0 0 6 8" fill="none" stroke="#333" stroke-width="1.300"><path d="M5 1L2 4l3 3"/></svg>
                    <span class="ml-[5px] h-3 w-[51px] bg-[#c9c9c9]"></span>
                </div>
            </div>
            <button class="mt-[7px] h-[17px] shrink-0 border border-[#b5b5b5] bg-gradient-to-b from-[#f4f4f4] to-[#d9d9d9] pl-1 text-left text-[#26304f]">Dependencies</button>
            <button class="mb-[5px] h-[17px] shrink-0 border border-t-0 border-[#b5b5b5] bg-gradient-to-b from-[#f4f4f4] to-[#d9d9d9] pl-1 text-left text-[#26304f]">Details</button>
        </section>

        <!-- Graphics window -->
        <section class="flex min-w-0 flex-1 flex-col bg-white">
            <div class="flex h-[17px] shrink-0 border-b-2 border-[#3a3a3a] bg-[#ebebeb]">
                <div class="ml-[97px] flex w-[132px] items-center bg-[#4b4b4b] pl-[3px] text-white">
                    <svg class="mr-1 h-[10px] w-[10px]" viewBox="0 0 10 10" fill="none" stroke="#383838"><path d="M1 2h4v5H1zM6 2v6h3V4H6"/></svg>
                    TEST_CAM_Finish.prt
                    <svg class="ml-1 h-2 w-2" viewBox="0 0 8 8" fill="none" stroke="#fff"><path d="M6 2V1H1v6h5V6M3 4h4M5 2l2 2-2 2"/></svg>
                    <svg class="ml-1 h-[6px] w-[6px]" viewBox="0 0 6 6" stroke="#ccc"><path d="M0 0l6 6M6 0L0 6"/></svg>
                </div>
            </div>
            <svg class="min-h-0 w-full flex-1" viewBox="270 151 987 552">
                <defs>
                    <linearGradient id="sideLeft" gradientUnits="userSpaceOnUse" x1="485" y1="300" x2="665" y2="470"><stop offset="0" stop-color="#243f97"/><stop offset=".15" stop-color="#1c3a86"/><stop offset=".8" stop-color="#22418f"/><stop offset="1" stop-color="#264899"/></linearGradient>
                    <linearGradient id="sideFront" gradientUnits="userSpaceOnUse" x1="636" y1="0" x2="1080" y2="0"><stop offset="0" stop-color="#22418f"/><stop offset=".06" stop-color="#3058b6"/><stop offset=".3" stop-color="#2a51a6"/><stop offset=".9" stop-color="#2a51a6"/><stop offset=".97" stop-color="#3159b8"/><stop offset="1" stop-color="#2a4eb0"/></linearGradient>
                    <linearGradient id="shank"><stop offset="0" stop-color="#8f8f8f"/><stop offset=".5" stop-color="#b8b8b8"/><stop offset="1" stop-color="#9a9a9a"/></linearGradient>
                    <linearGradient id="flute"><stop offset="0" stop-color="#c9a224"/><stop offset=".5" stop-color="#f8d442"/><stop offset="1" stop-color="#dfb52e"/></linearGradient>
                </defs>
                <!-- cutter -->
                <path d="M955.500 211L949 256l17 10 8.500-54z" fill="url(#flute)"/>
                <path d="M963 172l-7.500 39c2 5 17 5 19 1l6.500-38c-2-6-16-6-18-2z" fill="url(#shank)"/>
                <ellipse cx="972" cy="173" rx="9" ry="4" fill="#aaa" stroke="#555" stroke-width=".8"/>
                <ellipse cx="965" cy="211.500" rx="9.500" ry="4" fill="#c9a94a" stroke="#555" stroke-width=".8"/>
                <!-- stock -->
                <path d="M459.500 315l30-7 580 95 28 30L643 504.500z" fill="#3a6be0"/>
                <path d="M459.500 315L643 504.500 639 579.500 455.500 390z" fill="#006a98"/>
                <path d="M643 504.500l454.500-71.200-4 75.500L639 579.500z" fill="#0c94cc"/>
                <!-- boss -->
                <path d="M484.700 287l-.9 36C530 378 600 452 640 486q10 8 22 7l-1-45z" fill="url(#sideLeft)"/>
                <path d="M636 440l1 43q10 10 25 10C790 472 920 456 1060 432q15-3 18-9l1.600-33-100-20z" fill="url(#sideFront)"/>
                <path d="M484.700 289c1-6 10-9 24.700-12C620 254 760 235 895 217c12-1 19 3 26 11 10 10 18 20 28 25l8 1c8 7 14 14 21 22.500C1003 301 1026 322 1047 346.500c13 15 23 27 32.500 42v4c-3 3-12 5-22 7L830 434.500 678 457c-14 3-24 2-33-4-20-14-50-44-80-77S505 310 484.700 289z" fill="#02a6ec"/>
                <circle cx="786" cy="482" r="1" fill="#9cc8f0"/>
                <!-- axes -->
                <g font-family="Liberation Sans, Arial, sans-serif" font-size="9">
                    <path d="M780.500 337.500L784 280" stroke="#1530c8" stroke-width="1.300"/>
                    <path d="M784 275l3 13h-6zM782 305l2 17-4-1z" fill="#1530c8"/>
                    <path d="M780.500 337.500L838 329.500" stroke="#e03030" stroke-width="1.200"/>
                    <path d="M844 328.500l-13-1 1 5zM812 330l-18 4 6 2z" fill="#d83030"/>
                    <path d="M780.500 337.500L756 312" stroke="#1f8f30" stroke-width="1.200"/>
                    <path d="M752.500 308.500l4 8 4-4zM766 322l8 10 1-5z" fill="#1f8f30"/>
                    <text x="770" y="275" fill="#1d3fd6">ZM</text>
                    <text x="769" y="303" fill="#1d3fd6">ZC</text>
                    <text x="753" y="306" fill="#3c9a50">YM</text>
                    <text x="766" y="320" fill="#3c9a50">YC</text>
                    <text x="804" y="329" fill="#b0508a">XC</text>
                    <text x="833" y="325" fill="#b0508a">XM</text>
                </g>
                <!-- pick cursor -->
                <circle cx="589" cy="337" r="7.500" fill="none" stroke="#d5f1f5" stroke-width="1.300"/>
                <path d="M589 326.500v21M578.500 337h21" stroke="#8f6f6f" stroke-width="1.800"/>
                <circle cx="589" cy="337" r="1.200" fill="#fff"/>
            </svg>
        </section>

        <!-- Right toolbar -->
        <aside class="flex w-[23px] shrink-0 flex-col items-center gap-[5px] border-l border-[#bbb] bg-[#e6e6e6] pt-2">
            <svg class="h-4 w-4 shrink-0" viewBox="0 0 16 16"><path d="M0 4l4-3 7 1v6l-4 3-7-1z" fill="#5b7de0"/><path d="M1 5h5v5H1z" fill="#e89a50"/><path d="M11 8v7h3M11 11h3" fill="none" stroke="#2b3a90"/><path d="M12 9h3v2h-3zM12 13h3v2h-3z" fill="#2b3a90"/></svg>
            <svg class="h-4 w-4 shrink-0" viewBox="0 0 16 16" fill="none" stroke="#4a64b0"><path d="M0 2h8v8H0zM5 5h6v6H5zM1 9l6-6"/><path d="M12 9h3v2h-3zM12 13h3v2h-3z" fill="#2b3a90"/></svg>
            <svg class="h-4 w-4 shrink-0" viewBox="0 0 16 16" fill="#999" stroke="#444"><path d="M1 10l1-3 5 1 1-7c4 0 6 3 6 7l1 3-5 4-5-1z"/><ellipse cx="7" cy="11" rx="4" ry="2" fill="#ddd"/></svg>
            <svg class="h-4 w-4 shrink-0" viewBox="0 0 16 16" fill="none" stroke="#555"><path d="M1 8c4-5 10-5 14 0-4 5-10 5-14 0z"/><circle cx="8" cy="8" r="2.500"/><path d="M14 1L2 15"/></svg>
            <svg class="mt-[2px] h-4 w-4 shrink-0" viewBox="0 0 16 16" fill="none" stroke="#444"><path d="M.5.500h15v15H.500zM1 3h14"/><path d="M3 8V5h3M10 5h3v3M13 11v3h-3M6 14H3v-3M3 5l3 3M13 5l-3 3M3 14l3-3M13 14l-3-3"/></svg>
            <svg class="h-4 w-4 shrink-0" viewBox="0 0 16 16"><path d="M6 0h4v7H6z" fill="#2b3fa4"/><path d="M8 3h3v4H8z" fill="#e8822a"/><path d="M0 7h5v8H0z" fill="#3b6bd0"/><path d="M9 8v7h5" fill="none" stroke="#7a86c4"/><path d="M11 8h4v3h-4zM11 12h4v3h-4z" fill="#8d9ce0"/></svg>
            <svg class="h-4 w-4 shrink-0" viewBox="0 0 16 16" fill="none" stroke="#444"><path d="M15 1L2 15M1 4c2-3 6-3 8 0-2 2-6 2-8 0zM6 11c2-3 7-3 9 0-2 3-7 3-9 0z"/><circle cx="11" cy="11" r="1.800" fill="#333"/><circle cx="5" cy="4" r="1"/></svg>
            <svg class="h-4 w-4 shrink-0" viewBox="0 0 16 16" fill="none" stroke="#555"><path d="M1 8c3-6 11-6 14 0-3 6-11 6-14 0z"/><circle cx="8" cy="8" r="2.500" fill="#333"/></svg>
            <svg class="h-4 w-4 shrink-0" viewBox="0 0 16 16"><path d="M1 6h6M0 9h6M2 12h5" stroke="#5aaee0" stroke-width="1.500"/><circle cx="11" cy="4" r="3" fill="#f0a060"/><path d="M12 1l3 2-1 3z" fill="#334a9c"/><path d="M10 6l2 3h4l-3 3 1 4-4-2-4 2 1-4-2-3h3z" fill="#f6d33a"/></svg>
            <svg class="h-4 w-4 shrink-0" viewBox="0 0 16 16" fill="#ddd" stroke="#555"><path d="M1 12L12 1l3 2L4 15z"/><path d="M4 10l2 1M7 7l2 1M10 4l2 1"/></svg>
            <span class="h-px w-3 bg-[#bbb]"></span>
            <svg class="mt-auto mb-[6px] h-[5px] w-[3px]" viewBox="0 0 3 5"><path d="M3 0v5L0 2.500z" fill="#333"/></svg>
        </aside>
    </main>

    <!-- Status line -->
    <footer class="mb-[2px] flex h-[15px] shrink-0 items-center bg-[#d6d6d6] pl-[2px] font-bold text-black">
        <span class="flex-1">Choose Step or Play to start dynamic material removal</span>
        <span class="h-full w-[119px] border-x border-[#bbb]"></span>
        <span class="w-[540px]"></span>
    </footer>

    <!-- Video captions -->
    <p class="absolute top-[160px] right-[19px] font-['Liberation_Serif',serif] text-[27px] leading-[32px] text-[#3950dd] italic [text-shadow:2px_3px_4px_rgb(0_0_0/0.25)]">www.facebook.com/dtmth/</p>
    <p class="absolute right-[19px] bottom-[25px] font-['Liberation_Serif',serif] text-[27px] leading-[32px] text-[#3950dd] italic [text-shadow:2px_3px_4px_rgb(0_0_0/0.25)]">By Wiroch DTM</p>

    <!-- Tool Path Visualization dialog -->
    <div role="dialog" aria-label="Tool Path Visualization" class="absolute top-[34px] left-[114px] flex w-[242px] flex-col rounded-b border border-b-4 border-[#111] border-x-[#555] bg-[#ebebeb] shadow-sm">
        <div class="flex h-[15px] items-center bg-gradient-to-b from-[#4a4a4a] to-[#101010] text-[#e4e4e4]">
            <span class="flex w-[17px] justify-center border-r border-[#555]"><svg class="h-[10px] w-[10px]"><use href="#gear"/></svg></span>
            <span class="flex-1 pl-[2px]">Tool Path Visualization</span>
            <button class="w-4 border-l border-[#555] text-[12px] font-bold text-white">?</button>
            <button aria-label="Close dialog" class="flex h-[13px] w-4 items-center justify-center border-l border-[#555]"><svg class="h-2 w-2" viewBox="0 0 8 8" stroke="#fff" stroke-width="2"><path d="M1 1l6 6M7 1L1 7"/></svg></button>
        </div>

        <div class="mt-[5px] mr-[6px] ml-[7px] border border-[#9a9a9a] bg-[#f0f0f0]">
            <div class="flex">
                <ul class="grid h-[81px] min-w-0 flex-1 grid-rows-6 overflow-hidden bg-white pl-px text-[#222]">
                    <li class="overflow-hidden whitespace-nowrap bg-[#0a72d0] text-white">GOTO/-52.719,-143.302,18.110,0.0053032,-0.0033</li>
                    <li class="overflow-hidden whitespace-nowrap">GOTO/-52.947,-143.159,-24.889</li>
                    <li class="overflow-hidden whitespace-nowrap">GOTO/-53.467,-140.719,-24.878,0.0053308,-0.003</li>
                    <li class="overflow-hidden whitespace-nowrap">GOTO/-53.504,-140.591,-24.877,0.0053329,-0.003</li>
                    <li class="overflow-hidden whitespace-nowrap">GOTO/-53.557,-140.468,-24.877,0.0050731,-0.009</li>
                    <li class="overflow-hidden whitespace-nowrap">GOTO/-53.592,-140.410,-24.876,0.0048706,-0.015</li>
                </ul>
                <div class="flex w-[14px] flex-col items-center pt-1 pb-1">
                    <svg class="h-[6px] w-2 shrink-0" viewBox="0 0 8 6" fill="none" stroke="#333" stroke-width="1.300"><path d="M1 5l3-3 3 3"/></svg>
                    <span class="mt-[5px] h-9 w-3 bg-[#c9c9c9]"></span>
                    <svg class="mt-auto h-[6px] w-2 shrink-0" viewBox="0 0 8 6" fill="none" stroke="#333" stroke-width="1.300"><path d="M1 1l3 3 3-3"/></svg>
                </div>
            </div>
            <div class="flex h-[15px] items-center pr-[18px] pl-1">
                <svg class="h-2 w-[6px]" viewBox="0 0 6 8" fill="none" stroke="#333" stroke-width="1.300"><path d="M5 1L2 4l3 3"/></svg>
                <span class="ml-1 h-3 w-[130px] bg-[#c9c9c9]"></span>
                <svg class="ml-auto h-2 w-[6px]" viewBox="0 0 6 8" fill="none" stroke="#333" stroke-width="1.300"><path d="M1 1l3 3-3 3"/></svg>
            </div>
        </div>

        <div class="mt-[3px] px-[6px]">
            <output class="block pl-[5px]">1</output>
            <input type="range" aria-label="Motion" min="1" max="20266" value="1" class="mt-px ml-[4px] block h-[14px] w-[219px] appearance-none bg-transparent [&::-webkit-slider-runnable-track]:h-px [&::-webkit-slider-runnable-track]:bg-[#8c8c8c] [&::-webkit-slider-thumb]:-mt-[6px] [&::-webkit-slider-thumb]:h-[13px] [&::-webkit-slider-thumb]:w-[6px] [&::-webkit-slider-thumb]:appearance-none [&::-webkit-slider-thumb]:rounded-t-full [&::-webkit-slider-thumb]:border [&::-webkit-slider-thumb]:border-[#24709c] [&::-webkit-slider-thumb]:bg-[#9fdff5]">
            <div class="mt-[3px] flex justify-between pl-[3px]"><span>1</span><span>20266</span></div>
            <p class="mt-1">Feed Rate 0.000000</p>
        </div>

        <div class="mt-[2px] flex items-end pl-[7px] text-[#a2a2a2]">
            <button class="h-[17px] w-10 rounded-t-sm border border-b-0 border-[#b8b8b8]">Replay</button>
            <button class="h-[19px] w-16 rounded-t-sm border border-b-0 border-[#b8b8b8]">3D Dynamic</button>
            <button class="h-[17px] w-[60px] rounded-t-sm border border-b-0 border-[#b8b8b8]">2D Dynamic</button>
        </div>

        <div class="mr-[7px] ml-[6px] flex flex-col border border-r-2 border-b-2 border-[#b4b4b4] pt-1 pr-1 pb-[3px] pl-[3px] text-[#9a9a9a]">
            <div class="flex h-5 items-center justify-between">
                <label for="toolDisplay">Tool Display</label>
                <div class="flex h-[18px] w-[67px] border border-[#aaa] bg-[#d0d0d0]"><select id="toolDisplay" class="min-w-0 flex-1 appearance-none pl-[2px] text-[#808080]"><option>Tool</option></select><span class="flex w-[13px] items-center justify-center border-l border-[#aaa] bg-[#ededed]"><svg class="h-1 w-[6px]"><use href="#tri"/></svg></span></div>
            </div>
            <div class="flex h-5 items-center justify-between">
                <label for="toolPath">Tool Path</label>
                <div class="flex h-[18px] w-[122px] border border-[#aaa] bg-[#d0d0d0]"><select id="toolPath" class="min-w-0 flex-1 appearance-none pl-[2px] text-[#808080]"><option>None</option></select><span class="flex w-[13px] items-center justify-center border-l border-[#aaa] bg-[#ededed]"><svg class="h-1 w-[6px]"><use href="#tri"/></svg></span></div>
            </div>
            <div class="flex h-5 items-center justify-between">
                <label for="motions">Number of Motions</label>
                <input id="motions" type="text" value="10" class="h-[17px] w-[65px] border border-[#aaa] bg-[#d0d0d0] pr-px text-right font-['DejaVu_Sans_Mono',monospace] text-[12px] text-[#808080]">
            </div>
            <div class="flex h-[19px] items-center justify-between">
                <label for="ipwResolution">IPW Resolution</label>
                <div class="flex h-[18px] w-[63px] border border-[#aaa] bg-[#d0d0d0]"><select id="ipwResolution" class="min-w-0 flex-1 appearance-none pl-[2px] text-[#808080]"><option>Medium</option></select><span class="flex w-[13px] items-center justify-center border-l border-[#aaa] bg-[#ededed]"><svg class="h-1 w-[6px]"><use href="#tri"/></svg></span></div>
            </div>
            <button class="mt-px h-5 rounded-sm border border-[#b0b0b0] bg-gradient-to-b from-[#f2f2f2] via-[#e2e2e2] to-[#f2f2f2]">Display Options</button>
            <button class="mt-[3px] h-5 rounded-sm border border-[#b0b0b0] bg-gradient-to-b from-[#f2f2f2] via-[#e2e2e2] to-[#f2f2f2]">Enhance IPW Resolution</button>
            <hr class="mt-[2px] border-[#c2c2c2]">
            <div class="mt-px flex h-[21px] items-center justify-between">
                <label for="ipw">IPW</label>
                <div class="flex h-[18px] w-[107px] border border-[#aaa] bg-[#d0d0d0]"><select id="ipw" class="min-w-0 flex-1 appearance-none pl-[2px] text-[#808080]"><option>None</option></select><span class="flex w-[13px] items-center justify-center border-l border-[#aaa] bg-[#ededed]"><svg class="h-1 w-[6px]"><use href="#tri"/></svg></span></div>
            </div>
            <div class="grid grid-cols-2 gap-x-[2px] gap-y-1">
                <button class="h-5 rounded-sm border border-[#b0b0b0] bg-gradient-to-b from-[#f2f2f2] via-[#e2e2e2] to-[#f2f2f2]">Create</button>
                <button class="h-5 rounded-sm border border-[#b0b0b0] bg-gradient-to-b from-[#f2f2f2] via-[#e2e2e2] to-[#f2f2f2]">Delete</button>
                <button class="col-span-2 h-5 rounded-sm border border-[#b0b0b0] bg-gradient-to-b from-[#f2f2f2] via-[#e2e2e2] to-[#f2f2f2]">Analyze</button>
                <button class="h-5 rounded-sm border border-[#b0b0b0] bg-gradient-to-b from-[#f2f2f2] via-[#e2e2e2] to-[#f2f2f2]">Show 3D</button>
                <button class="h-5 rounded-sm border border-[#b0b0b0] bg-gradient-to-b from-[#f2f2f2] via-[#e2e2e2] to-[#f2f2f2]">Show Spinning 3D</button>
            </div>
            <hr class="mt-[3px] border-[#c2c2c2]">
            <label class="mt-[2px] flex h-[17px] items-center gap-1"><input type="checkbox" checked class="sr-only"><span class="flex h-[10px] w-[10px] items-center justify-center rounded-[2px] border border-[#999]"><svg class="h-[7px] w-[7px]" viewBox="0 0 8 8" fill="none" stroke="#999" stroke-width="1.800"><path d="M1 4l2 3 4-6"/></svg></span>Check for IPW Collisions</label>
            <label class="flex h-[17px] items-center gap-1"><input type="checkbox" checked class="sr-only"><span class="flex h-[10px] w-[10px] items-center justify-center rounded-[2px] border border-[#999]"><svg class="h-[7px] w-[7px]" viewBox="0 0 8 8" fill="none" stroke="#999" stroke-width="1.800"><path d="M1 4l2 3 4-6"/></svg></span>Check Tool and Holder</label>
            <div class="mt-px grid grid-cols-2 gap-x-[2px]">
                <button class="h-5 rounded-sm border border-[#b0b0b0] bg-gradient-to-b from-[#f2f2f2] via-[#e2e2e2] to-[#f2f2f2]">Collision Settings</button>
                <button class="h-5 rounded-sm border border-[#b0b0b0] bg-gradient-to-b from-[#f2f2f2] via-[#e2e2e2] to-[#f2f2f2]">List</button>
            </div>
            <hr class="mt-[3px] border-[#c2c2c2]">
            <button class="mt-[3px] h-5 rounded-sm border border-[#b0b0b0] bg-gradient-to-b from-[#f2f2f2] via-[#e2e2e2] to-[#f2f2f2]">Reset</button>
            <hr class="mt-[2px] border-[#c2c2c2]">
            <label class="mt-[2px] flex h-[17px] items-center gap-1"><input type="checkbox" class="sr-only"><span class="h-[10px] w-[10px] rounded-[2px] border border-[#999]"></span>Suppress Animation</label>
        </div>

        <div class="mt-1 px-[6px]">
            <label for="animationSpeed" class="block">Animation Speed</label>
            <output class="mt-1 block pl-[146px]">7</output>
            <input id="animationSpeed" type="range" min="1" max="10" value="7" class="mt-px ml-[4px] block h-[14px] w-[219px] appearance-none bg-transparent [&::-webkit-slider-runnable-track]:h-px [&::-webkit-slider-runnable-track]:bg-[#8c8c8c] [&::-webkit-slider-thumb]:-mt-[6px] [&::-webkit-slider-thumb]:h-[13px] [&::-webkit-slider-thumb]:w-[6px] [&::-webkit-slider-thumb]:appearance-none [&::-webkit-slider-thumb]:rounded-t-full [&::-webkit-slider-thumb]:border [&::-webkit-slider-thumb]:border-[#24709c] [&::-webkit-slider-thumb]:bg-[#9fdff5]">
            <div class="mt-[3px] flex justify-between pl-[3px]"><span>1</span><span>10</span></div>
        </div>

        <div class="mx-auto mt-[3px] grid w-[157px] grid-cols-7 gap-[2px]">
            <button aria-label="Rewind to start" class="flex h-5 items-center justify-center rounded-sm border border-[#a8a8a8] bg-[#eee]"><svg class="h-3 w-[14px]" viewBox="0 0 14 12" fill="#9c8686"><path d="M0 1h1.500v10H0zM8 1v10L2 6zM14 1v10L8 6z"/></svg></button>
            <button aria-label="Step back" class="flex h-5 items-center justify-center rounded-sm border border-[#a8a8a8] bg-[#eee]"><svg class="h-3 w-[14px]" viewBox="0 0 14 12" fill="#9c8686"><path d="M3 1h1.500v10H3zM11 1v10L5 6z"/></svg></button>
            <button aria-label="Play backward" class="flex h-5 items-center justify-center rounded-sm border border-[#a8a8a8] bg-[#eee]"><svg class="h-3 w-[14px]" viewBox="0 0 14 12" fill="#9c8686"><path d="M9 1v10L4 6z"/></svg></button>
            <button aria-label="Play" class="flex h-5 items-center justify-center rounded-sm border border-[#a8a8a8] bg-[#eee]"><svg class="h-3 w-[14px]" viewBox="0 0 14 12" fill="#9c8686"><path d="M5 1v10l5-5z"/></svg></button>
            <button aria-label="Step" class="flex h-5 items-center justify-center rounded-sm border border-[#a8a8a8] bg-[#eee]"><svg class="h-3 w-[14px]" viewBox="0 0 14 12" fill="#9c8686"><path d="M3 1v10l6-5zM9.500 1H11v10H9.500z"/></svg></button>
            <button aria-label="Forward to end" class="flex h-5 items-center justify-center rounded-sm border border-[#a8a8a8] bg-[#eee]"><svg class="h-3 w-[14px]" viewBox="0 0 14 12" fill="#9c8686"><path d="M0 1v10l6-5zM6 1v10l6-5zM12.500 1H14v10h-1.500z"/></svg></button>
            <button aria-label="Stop" class="flex h-5 items-center justify-center rounded-sm border border-[#777] bg-[#e2e2e2]"><span class="h-2 w-2 bg-[#800000]"></span></button>
        </div>
        <hr class="mx-[5px] mt-[6px] border-[#d0d0d0]">
        <div class="mt-[2px] mb-1 flex justify-end gap-1 pr-[10px] text-[#9a9a9a]">
            <button class="h-[18px] w-12 rounded-sm border border-[#b0b0b0] bg-gradient-to-b from-[#f2f2f2] via-[#e2e2e2] to-[#f2f2f2]">OK</button>
            <button class="h-[18px] w-[49px] rounded-sm border border-[#b0b0b0] bg-gradient-to-b from-[#f2f2f2] via-[#e2e2e2] to-[#f2f2f2]">Cancel</button>
        </div>
    </div>

    <script>
        // level, icon, label, state ('!' = regenerate, 'ok' = complete), purple text, expanded
        const nodes = [
            [0, '', 'NC_PROGRAM', ''],
            [1, 'folder', 'Unused Items', ''],
            [1, 'folder', 'PROGRAM', '!', false, true],
            [2, 'folder', 'O0001', '!', false, true],
            [3, 'op-multi', 'MULTI_AXIS', '!', true],
            [2, 'folder', 'O0002', '!', false, true],
            [3, 'op-cavity', 'CAVITY_MILL', '!', true],
            [3, 'op-face', 'FACE_MILL', '!', true],
            [2, 'folder', 'O0003', '!', false, true],
            [3, 'op-zlevel', 'ZLEVEL', '!', true],
            [2, 'folder', 'O0004', '!', false, true],
            [3, 'op-flow', 'FLOWCUT', '!', true],
            [2, 'folder', 'O0005', '!', false, true],
            [3, 'op-pocket', 'CONTOUR', '!'],
            [3, 'op-area', 'CONTOUR', '!'],
            [3, 'op-area', 'CONTOUR', '!'],
            [3, 'op-area', 'CONTOUR', '!'],
            [3, 'op-flow', 'CONTOUR', '!'],
            [3, 'op-pocket', 'CONTOUR', '!'],
            [2, 'folder', 'O0006', '!', false, true],
            [3, 'op-zlevel', 'ZLEVEL', '!', true],
            [3, 'op-zlevel', 'ZLEVEL', '!'],
            [2, 'folder', 'O0007', '!', false, true],
            [3, 'op-flow', 'FLOWCUT', '!', true],
            [2, 'folder', 'O0008', 'ok'],
            [2, 'folder', 'O0009', 'ok'],
            [2, 'folder', 'O0010', '!'],
            [0, '', '', ''],
            [0, '', '', '']
        ];
        const indents = ['pl-[2px]', 'pl-[2px]', 'pl-[15px]', 'pl-[28px]'];
        const tree = document.getElementById('programTree');

        nodes.forEach(([level, icon, label, state, purple, open], i) => {
            const li = document.createElement('li');
            li.className = 'flex h-4 items-center whitespace-nowrap ' + indents[level] + (i % 2 ? ' bg-[#f3f3f3]' : '');
            let html = '';
            if (icon && state) {
                html += open
                    ? '<span class="relative z-10 flex h-[7px] w-[7px] items-center justify-center border border-[#aaa] bg-white"><span class="h-px w-[3px] bg-[#666]"></span></span>'
                    : '<span class="w-[7px]"></span>';
                html += state === 'ok'
                    ? '<svg class="mr-px ml-[2px] h-3 w-3"><use href="#check"/></svg>'
                    : '<span class="mr-[5px] ml-2 h-[11px] w-[2px] bg-[#edb84c]"></span>';
            } else if (icon) {
                html += '<span class="w-[11px]"></span>';
            }
            if (icon) {
                html += '<svg class="mr-px h-[11px] w-[11px]"><use href="#' + icon + '"/></svg>';
            }
            html += '<span class="' + (purple ? 'text-[#5b35a8]' : '') + '">' + label + '</span>';
            li.innerHTML = html;
            tree.appendChild(li);
        });
    </script>
</body>
</html>
